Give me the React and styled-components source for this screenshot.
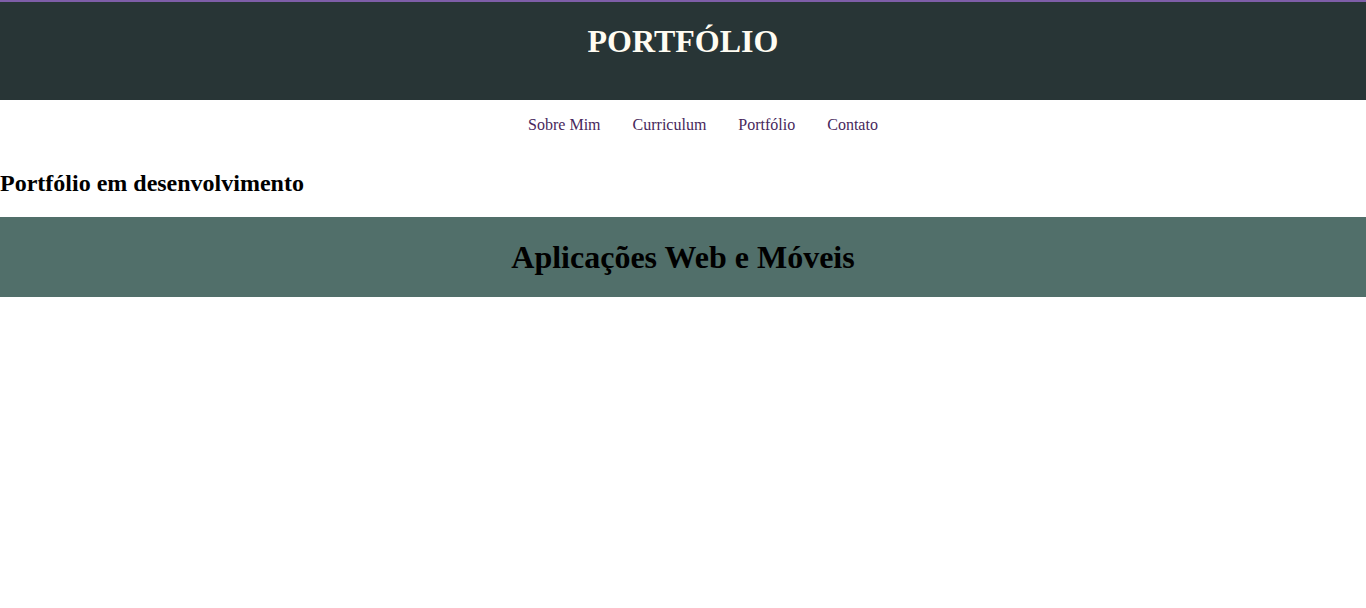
import React from "react";
import styled, { createGlobalStyle } from "styled-components";

const Global = createGlobalStyle`
  html, body { margin: 0; padding: 0; background: #ffffff; }
  body { font-family: "Liberation Serif", "Times New Roman", serif; color: #000; }
`;

const Header = styled.header`
  border-top: 2px solid #7e5ea8;
  background: #283536;
  height: 98px;
  overflow: hidden;
`;

const Title = styled.h1`
  margin: 21.44px 0;
  font-size: 32px;
  font-weight: bold;
  text-align: center;
  color: #fffcf2;
`;

const Nav = styled.nav`
  display: flow-root;
`;

const NavList = styled.ul`
  list-style: none;
  margin: 16px 0;
  padding: 0 0 0 40px;
  display: flex;
  justify-content: center;
`;

const NavItem = styled.li`
  padding: 0 16px;
  font-size: 16px;
`;

const NavLink = styled.a`
  color: #47285c;
  text-decoration: none;
`;

const Subtitle = styled.h2`
  margin: 20px 0;
  font-size: 24px;
  font-weight: bold;
`;

const Banner = styled.section`
  background: #516f6a;
  height: 80px;
  display: flex;
  align-items: center;
  justify-content: center;
`;

const BannerTitle = styled.h1`
  margin: 0;
  font-size: 32px;
  font-weight: bold;
  color: #000;
`;

const links = ["Sobre Mim", "Curriculum", "Portfólio", "Contato"];

export default function App() {
  return (
    <>
      <Global />
      <Header>
        <Title>PORTFÓLIO</Title>
      </Header>
      <Nav>
        <NavList>
          {links.map((l) => (
            <NavItem key={l}>
              <NavLink href="#">{l}</NavLink>
            </NavItem>
          ))}
        </NavList>
      </Nav>
      <Subtitle>Portfólio em desenvolvimento</Subtitle>
      <Banner>
        <BannerTitle>Aplicações Web e Móveis</BannerTitle>
      </Banner>
    </>
  );
}
